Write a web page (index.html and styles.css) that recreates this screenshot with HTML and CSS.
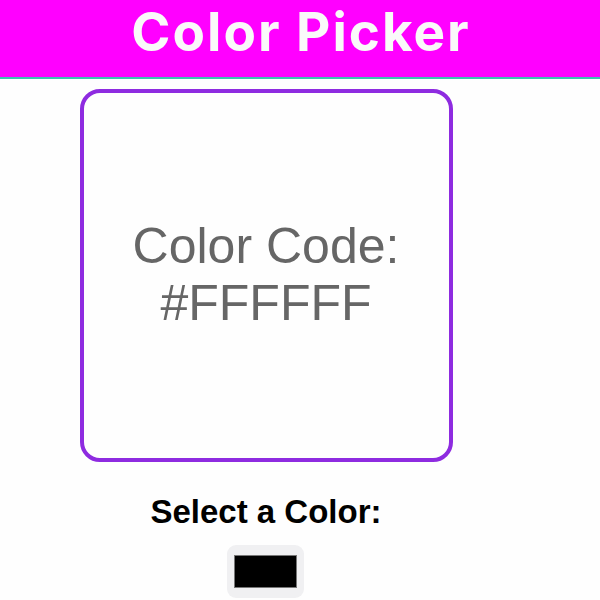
FILE: index.html
```html
<!DOCTYPE html>
<html>
<head>
<meta charset="utf-8">
<link rel="stylesheet" href="styles.css">
</head>
<body>
<header class="header"><h1 class="title">Color Picker</h1></header>
<main class="main">
  <div class="card">
    <p class="code">Color Code:<br>#FFFFFF</p>
  </div>
  <div class="picker">
    <label class="label" for="c">Select a Color:</label>
    <div class="input-wrap"><span class="swatch"></span></div>
  </div>
</main>
</body>
</html>
```

FILE: styles.css
```css
html, body { margin: 0; padding: 0; background: #fefefe; }
body { font-family: "Liberation Sans", Arial, sans-serif; }
.header {
  height: 77px;
  background: #ff00ff;
  border-bottom: 2px solid #3cc3b0;
  display: flex;
  align-items: flex-start;
  justify-content: center;
}
.title {
  margin: 0 0 0 2px;
  font-family: Inter, sans-serif;
  font-weight: 700;
  font-size: 53px;
  color: #fafafa;
  letter-spacing: 2px;
  line-height: normal;
}
.main {
  padding-left: 80px;
  padding-top: 10px;
  width: 372px;
  display: flex;
  flex-direction: column;
  align-items: center;
}
.card {
  box-sizing: border-box;
  width: 373px;
  height: 373px;
  border: 4px solid #8e2be0;
  border-radius: 20px;
  display: flex;
  align-items: center;
  justify-content: center;
}
.code {
  margin: 0;
  text-align: center;
  font-size: 50px;
  line-height: 57px;
  color: #666666;
  padding-bottom: 2px;
}
.picker {
  display: flex;
  flex-direction: column;
  align-items: center;
  margin-top: 31px;
}
.label {
  font-weight: bold;
  font-size: 33px;
  line-height: 38px;
  color: #000;
}
.input-wrap {
  margin-top: 14px;
  width: 77px;
  height: 53px;
  box-sizing: border-box;
  background: #f0f0f2;
  border-radius: 9px;
  display: flex;
  align-items: center;
  justify-content: center;
}
.swatch {
  width: 63px;
  height: 33px;
  box-sizing: border-box;
  background: #000;
  border: 1px solid #777;
}
```
